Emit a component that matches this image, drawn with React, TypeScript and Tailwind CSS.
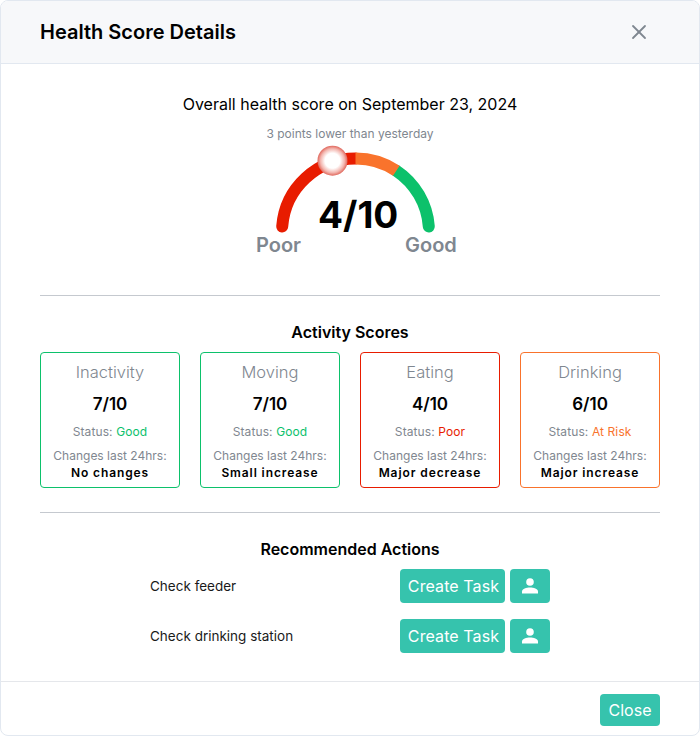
import React from 'react';
import { X } from 'lucide-react';

const cards = [
  { title: 'Inactivity', score: '7/10', status: 'Good', statusClass: 'text-[#0cc16b]', change: 'No changes', border: 'border-[#0cc16b]' },
  { title: 'Moving', score: '7/10', status: 'Good', statusClass: 'text-[#0cc16b]', change: 'Small increase', border: 'border-[#0cc16b]' },
  { title: 'Eating', score: '4/10', status: 'Poor', statusClass: 'text-[#e81c00]', change: 'Major decrease', border: 'border-[#e81c00]' },
  { title: 'Drinking', score: '6/10', status: 'At Risk', statusClass: 'text-[#f9732c]', change: 'Major increase', border: 'border-[#f9732c]' },
];

const actions = ['Check feeder', 'Check drinking station'];

// semicircle gauge, marker sits on the arc
const Gauge = () => (
  <svg width="170" height="100" viewBox="0 0 170 100" fill="none" className="block overflow-visible">
    <defs>
      <radialGradient id="knob">
        <stop offset="0%" stopColor="#ffffff" />
        <stop offset="50%" stopColor="#ffffff" />
        <stop offset="80%" stopColor="#f3b5ae" />
        <stop offset="100%" stopColor="#e0675c" />
      </radialGradient>
    </defs>
    <path d="M12.2 76.5 A73.5 73.5 0 0 1 85.5 8.5" stroke="#e81c00" strokeWidth="12" strokeLinecap="round" />
    <path d="M158.8 76.5 A73.5 73.5 0 0 0 126.3 20.7" stroke="#0cc16b" strokeWidth="12" strokeLinecap="round" />
    <path d="M85.5 8.5 A73.5 73.5 0 0 1 126.3 20.7" stroke="#f9732c" strokeWidth="12" />
    <circle cx="62.5" cy="10.7" r="15" fill="url(#knob)" />
  </svg>
);

const UserIcon = () => (
  <svg width="18" height="18" viewBox="0 0 18 18" fill="#ffffff">
    <circle cx="9" cy="5" r="3.8" />
    <path d="M1 16.5 V14.6 C1 11.8 5.5 10.6 9 10.6 C12.5 10.6 17 11.8 17 14.6 V16.5 Z" />
  </svg>
);

export default function App() {
  return (
    <div className="w-[700px] h-[736px] flex flex-col bg-white border border-[#e2e8f0] rounded-lg overflow-hidden font-['Inter',sans-serif] text-black">
      {/* header */}
      <div className="h-[63px] shrink-0 flex items-center justify-between pl-[39px] pr-[48px] bg-[#f7f8fa] border-b border-[#e2e8f0]">
        <h1 className="text-xl font-semibold">Health Score Details</h1>
        <X size={24} strokeWidth={1.8} className="text-[#7f8790]" />
      </div>

      {/* body */}
      <div className="flex-1 px-[39px] flex flex-col">
        <div className="flex flex-col items-center pt-[28px] h-[232px] border-b border-[#c5c9cf]">
          <p className="text-base leading-6">Overall health score on September 23, 2024</p>
          <p className="text-xs leading-4 text-[#7f8790] mt-[10px]">3 points lower than yesterday</p>
          <div className="relative mt-[8px] ml-[10px]">
            <Gauge />
            <span className="absolute left-[48px] top-[45px] text-[37px] leading-10 font-bold">4/10</span>
            <span className="absolute left-[-14px] top-[81px] text-xl leading-7 font-semibold text-[#7f8790]">Poor</span>
            <span className="absolute left-[135px] top-[81px] text-xl leading-7 font-semibold text-[#7f8790]">Good</span>
          </div>
        </div>

        <h2 className="text-base leading-6 font-semibold text-center mt-[24px]">Activity Scores</h2>
        <div className="grid grid-cols-4 gap-5 mt-[8px]">
          {cards.map((c) => (
            <div key={c.title} className={`h-[136px] border ${c.border} rounded flex flex-col items-center pt-[7px]`}>
              <div className="text-[16.5px] leading-6 text-[#7f8790] font-light">{c.title}</div>
              <div className="text-[17px] leading-6 font-semibold mt-[8px]">{c.score}</div>
              <div className="text-xs leading-4 text-[#7f8790] tracking-[0.1px] mt-[8px]">
                Status: <span className={c.statusClass}>{c.status}</span>
              </div>
              <div className="text-xs leading-4 text-[#7f8790] mt-[8px]">Changes last 24hrs:</div>
              <div className="text-xs leading-4 font-semibold tracking-[0.9px] mt-[1px]">{c.change}</div>
            </div>
          ))}
        </div>

        <div className="border-b border-[#c5c9cf] mt-[24px]" />

        <h2 className="text-base leading-6 font-semibold text-center mt-[24px]">Recommended Actions</h2>
        <div className="flex flex-col gap-4 mt-[8px]">
          {actions.map((a) => (
            <div key={a} className="flex items-center pl-[110px]">
              <span className="w-[250px] text-[13.5px] text-[#1a1a1a]">{a}</span>
              <button className="w-[105px] h-[34px] pl-[2px] bg-[#36c3ad] text-white rounded text-base tracking-[0.1px]">Create Task</button>
              <button className="w-[40px] h-[34px] ml-[5px] bg-[#36c3ad] rounded flex items-center justify-center">
                <UserIcon />
              </button>
            </div>
          ))}
        </div>
      </div>

      {/* footer */}
      <div className="h-[54px] shrink-0 border-t border-[#e5e7eb] flex items-start justify-end pr-[39px] pt-[12px]">
        <button className="w-[60px] h-[32px] bg-[#36c3ad] text-white rounded text-base">Close</button>
      </div>
    </div>
  );
}
